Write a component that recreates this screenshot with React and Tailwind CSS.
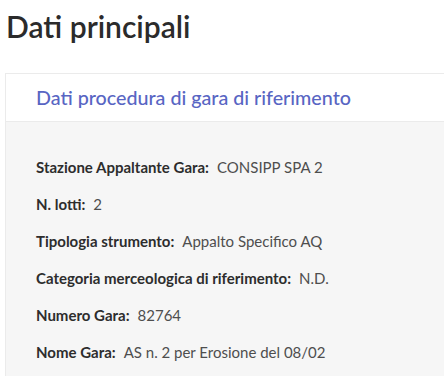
import React from "react";

const rows = [
    {label: "Stazione Appaltante Gara:", value: "CONSIPP SPA 2"},
    {label: "N. lotti:", value: "2"},
    {label: "Tipologia strumento:", value: "Appalto Specifico AQ"},
    {label: "Categoria merceologica di riferimento:", value: "N.D."},
    {label: "Numero Gara:", value: "82764"},
    {label: "Nome Gara:", value: "AS n. 2 per Erosione del 08/02"},
];

const App = () => {
    return <div className="w-[444px] h-[376px] overflow-hidden bg-white font-['Lato',sans-serif]">
        <h1 className="pl-[6px] pt-[5px] text-[30px] leading-[42px] font-semibold text-[#2b2b2b]">Dati principali</h1>
        <div className="ml-[5px] mt-[26px] w-[460px] border border-[#ebebeb]">
            <div className="bg-white border-b border-[#ebebeb] pl-[30px] h-[48px] flex items-center">
                <h2 className="text-[19.7px] text-[#5865c3] font-medium">Dati procedura di gara di riferimento</h2>
            </div>
            <div className="bg-[#f6f6f6] pl-[30px] pt-[35px] pb-4 flex flex-col gap-[17px]">
                {rows.map((row) => (
                    <div key={row.label} className="text-[15px] leading-[20px] flex gap-[8px]">
                        <span className="font-bold text-[#2d2d2d]">{row.label}</span>
                        <span className="text-[#4e4e4e]">{row.value}</span>
                    </div>
                ))}
            </div>
        </div>
    </div>
};

export default App;
